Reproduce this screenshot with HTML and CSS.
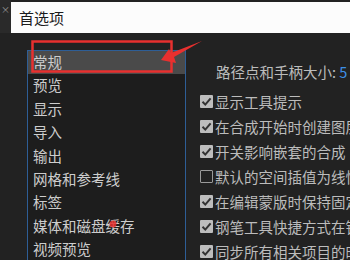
FILE: index.html
```html
<!DOCTYPE html>
<html>
  <head>
    <meta charset="utf-8" />
    <title>首选项</title>
    <link rel="stylesheet" href="styles.css">
  </head>
  <body>
    <div class="header">
      <div class="close-strip">×</div>
      <div class="titlebar">首选项</div>
    </div>

    <div class="content">
      <ul class="nav-list">
        <li class="active">常规</li>
        <li>预览</li>
        <li>显示</li>
        <li>导入</li>
        <li>输出</li>
        <li>网格和参考线</li>
        <li>标签</li>
        <li>媒体和磁盘缓存</li>
        <li>视频预览</li>
      </ul>

      <div class="prefs">
        <div class="pref-heading">路径点和手柄大小: <span class="value">5</span></div>
        <div class="pref-row"><span class="box checked"></span>显示工具提示</div>
        <div class="pref-row"><span class="box checked"></span>在合成开始时创建图层</div>
        <div class="pref-row"><span class="box checked"></span>开关影响嵌套的合成</div>
        <div class="pref-row"><span class="box"></span>默认的空间插值为线性</div>
        <div class="pref-row"><span class="box checked"></span>在编辑蒙版时保持固定</div>
        <div class="pref-row"><span class="box checked"></span>钢笔工具快捷方式在钢笔</div>
        <div class="pref-row"><span class="box checked"></span>同步所有相关项目的时间</div>
      </div>
    </div>

    <!-- annotation drawn over the screenshot -->
    <svg class="marks" width="350" height="260" viewBox="0 0 350 260">
      <rect x="32.5" y="41.5" width="139" height="30" fill="none" stroke="#e8302f" stroke-width="2.5" />
      <polygon points="161,60 169,49 171,53 202,41 174,57 176,63" fill="#e8302f" />
      <circle cx="113" cy="224" r="3.5" fill="#e8302f" opacity="0.85" />
    </svg>
  </body>
</html>
```

FILE: styles.css
```css
body {
  margin: 0;
  width: 350px;
  height: 260px;
  overflow: hidden;
  background-color: #222222;
  font-family: "Noto Sans CJK SC", "Noto Sans", sans-serif;
  position: relative;
}

.header {
  display: flex;
  height: 33px;
}

.close-strip {
  width: 11px;
  background-color: #2a2a2a;
  color: #9a9a9a;
  font-size: 9px;
  line-height: 20px;
  text-align: center;
}

.titlebar {
  flex: 1;
  margin-top: 2px;
  background-color: #fcfcfc;
  color: #1c1c1c;
  font-size: 15px;
  line-height: 31px;
  padding-left: 8px;
}

.content {
  display: flex;
  padding: 17px 0 0 27px;
  height: 210px;
  overflow: hidden;
}

.nav-list {
  list-style: none;
  margin: 0;
  padding: 0;
  width: 157px;
  flex-shrink: 0;
  border: 1px solid #2e5e96;
  border-bottom: none;
  background-color: #1d1d1d;
}

.nav-list li {
  height: 23.4px;
  line-height: 22px;
  padding-left: 5px;
  font-size: 14.5px;
  color: #cdcdcd;
}

.nav-list li.active {
  background-color: #4a4a4a;
}

.prefs {
  padding: 10px 0 0 14px;
  white-space: nowrap;
  color: #bcbcbc;
  font-size: 14.5px;
}

.pref-heading {
  line-height: 24px;
  padding-left: 16px;
  margin-bottom: 5px;
}

.pref-heading .value {
  color: #3d8fe6;
}

.pref-row {
  display: flex;
  align-items: center;
  gap: 2px;
  height: 25px;
}

.box {
  width: 13px;
  height: 13px;
  box-sizing: border-box;
  border: 1px solid #9a9a9a;
  border-radius: 1px;
  flex-shrink: 0;
}

.box.checked {
  border: none;
  background-color: #bdbdbd;
  background-image: url("data:image/svg+xml,%3Csvg xmlns='http://www.w3.org/2000/svg' viewBox='0 0 13 13'%3E%3Cpath d='M2.5 6.8 L5.3 9.6 L10.6 3.4' fill='none' stroke='%23333' stroke-width='2'/%3E%3C/svg%3E");
}

.marks {
  position: absolute;
  left: 0;
  top: 0;
  pointer-events: none;
}
```
